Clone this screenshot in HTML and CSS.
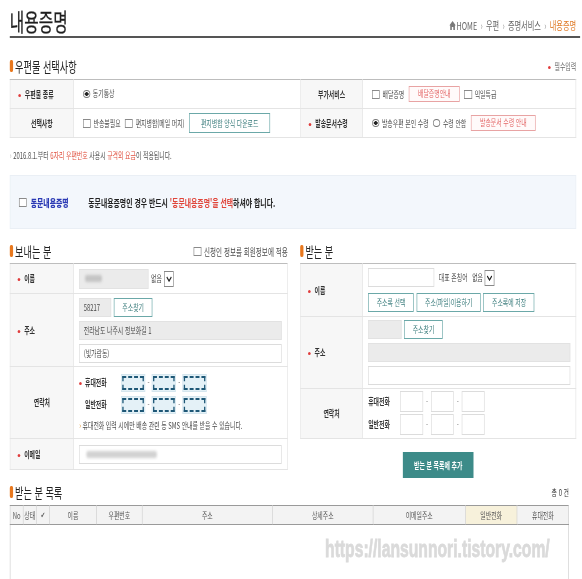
FILE: index.html
```html
<!DOCTYPE html>
<html lang="ko">
<head>
  <meta charset="UTF-8">
  <meta name="viewport" content="width=device-width, initial-scale=1.0">
  <title>내용증명 | 증명서비스</title>
  <link rel="stylesheet" href="styles.css">
</head>
<body>
  <div class="page">
    <!-- 상단 타이틀 + 경로 -->
    <div class="page-head">
      <h1>내용증명</h1>
      <div class="crumbs">
        <span class="home">
          <svg width="10" height="9" viewBox="0 0 10 9"><path d="M5 0 L10 4.6 H8.6 V9 H6.1 V6 H3.9 V9 H1.4 V4.6 H0 Z" fill="#7a7a7a"/></svg>
          HOME
        </span>
        <span class="sep">›</span><span>우편</span>
        <span class="sep">›</span><span>증명서비스</span>
        <span class="sep">›</span><span class="now">내용증명</span>
      </div>
    </div>

    <!-- 우편물 선택사항 -->
    <div class="sec-head first">
      <h2>우편물 선택사항</h2>
      <span class="req-note">필수입력</span>
    </div>
    <table class="form-table">
      <colgroup>
        <col class="c-th"><col class="c-val"><col class="c-th2"><col>
      </colgroup>
      <tr class="r29">
        <th class="req">우편물 종류</th>
        <td>
          <label class="opt"><span class="radio on"></span>동기통상</label>
        </td>
        <th>부가서비스</th>
        <td>
          <div class="opts">
            <label class="opt"><span class="chk"></span>배달증명</label>
            <button class="btn-red">배달증명안내</button>
            <label class="opt"><span class="chk"></span>익일특급</label>
          </div>
        </td>
      </tr>
      <tr class="r29">
        <th>선택사항</th>
        <td>
          <div class="opts">
            <label class="opt"><span class="chk"></span>반송불필요</label>
            <label class="opt"><span class="chk"></span>편지병합(메일 머지)</label>
            <button class="btn-line wide">편지병합 양식 다운로드</button>
          </div>
        </td>
        <th class="req">발송문서수령</th>
        <td>
          <div class="opts">
            <label class="opt"><span class="radio on"></span>발송우편 본인 수령</label>
            <label class="opt"><span class="radio"></span>수령 안함</label>
            <button class="btn-red">발송문서 수령 안내</button>
          </div>
        </td>
      </tr>
    </table>

    <p class="notice"><span class="arr">›</span> 2016.8.1.부터 <em>6자리 우편번호</em> 사용시 <em>규격외 요금</em>이 적용됩니다.</p>

    <div class="dongmun">
      <label class="opt"><span class="chk"></span><strong>동문내용증명</strong></label>
      <p>동문내용증명인 경우 반드시 <em>'동문내용증명'을 선택</em>하셔야 합니다.</p>
    </div>

    <div class="two-col">
      <!-- 보내는 분 -->
      <section>
        <div class="sec-head">
          <h2>보내는 분</h2>
          <label class="opt apply"><span class="chk"></span>신청인 정보를 회원정보에 적용</label>
        </div>
        <table class="form-table">
          <colgroup><col class="c-th"><col></colgroup>
          <tr class="r30">
            <th class="req">이름</th>
            <td>
              <div class="line">
                <span class="inp gray w-name"><span class="blur short"></span></span>
                <span class="sel">없음<span class="sel-arrow"><svg width="9" height="6" viewBox="0 0 9 6"><path d="M1 1 L4.5 5 L8 1" fill="none" stroke="#222" stroke-width="1.6"/></svg></span></span>
              </div>
            </td>
          </tr>
          <tr class="r73">
            <th class="req">주소</th>
            <td>
              <div class="stack">
                <div class="line">
                  <span class="inp gray w-zip">58217</span>
                  <button class="btn-line">주소찾기</button>
                </div>
                <span class="inp gray">전라남도 나주시 정보화길 1</span>
                <span class="inp">(빛가람동)</span>
              </div>
            </td>
          </tr>
          <tr class="r72">
            <th>연락처</th>
            <td>
              <div class="phone">
                <span class="ph-label req">휴대전화</span>
                <span class="tel"></span><span class="hy">-</span><span class="tel"></span><span class="hy">-</span><span class="tel"></span>
              </div>
              <div class="phone">
                <span class="ph-label">일반전화</span>
                <span class="tel"></span><span class="hy">-</span><span class="tel"></span><span class="hy">-</span><span class="tel"></span>
              </div>
              <p class="sms"><span class="arr">›</span> 휴대전화 입력 시에만 배송 관련 등 SMS 안내를 받을 수 있습니다.</p>
            </td>
          </tr>
          <tr class="r31">
            <th class="req">이메일</th>
            <td><span class="inp"><span class="blur long"></span></span></td>
          </tr>
        </table>
      </section>

      <!-- 받는 분 -->
      <section>
        <div class="sec-head">
          <h2>받는 분</h2>
        </div>
        <table class="form-table">
          <colgroup><col class="c-th2"><col></colgroup>
          <tr class="r53">
            <th class="req">이름</th>
            <td>
              <div class="stack wide-gap">
                <div class="line">
                  <span class="inp w-rname"></span>
                  <span class="honor">대표 존칭어</span>
                  <span class="sel boxed">없음<span class="sel-arrow"><svg width="9" height="6" viewBox="0 0 9 6"><path d="M1 1 L4.5 5 L8 1" fill="none" stroke="#222" stroke-width="1.6"/></svg></span></span>
                </div>
                <div class="line">
                  <button class="btn-line">주소록 선택</button>
                  <button class="btn-line">주소(파일)이용하기</button>
                  <button class="btn-line">주소록에 저장</button>
                </div>
              </div>
            </td>
          </tr>
          <tr class="r72">
            <th class="req">주소</th>
            <td>
              <div class="stack">
                <div class="line">
                  <span class="inp gray w-rzip"></span>
                  <button class="btn-line">주소찾기</button>
                </div>
                <span class="inp gray"></span>
                <span class="inp"></span>
              </div>
            </td>
          </tr>
          <tr class="r50">
            <th>연락처</th>
            <td>
              <div class="phone plain">
                <span class="ph-label">휴대전화</span>
                <span class="tel"></span><span class="hy">-</span><span class="tel"></span><span class="hy">-</span><span class="tel"></span>
              </div>
              <div class="phone plain">
                <span class="ph-label">일반전화</span>
                <span class="tel"></span><span class="hy">-</span><span class="tel"></span><span class="hy">-</span><span class="tel"></span>
              </div>
            </td>
          </tr>
        </table>
        <div class="add-wrap">
          <button class="btn-add">받는 분 목록에 추가</button>
        </div>
      </section>
    </div>

    <!-- 받는 분 목록 -->
    <div class="sec-head list-head">
      <h2>받는 분 목록</h2>
      <span class="total">총 0 건</span>
    </div>
    <table class="list">
      <colgroup>
        <col class="l-no"><col class="l-st"><col class="l-ck"><col class="l-name"><col class="l-zip">
        <col class="l-addr"><col class="l-detail"><col class="l-mail"><col class="l-tel"><col>
      </colgroup>
      <thead>
        <tr>
          <th>No</th><th>상태</th><th class="ck">✔</th><th>이름</th><th>우편번호</th>
          <th>주소</th><th>상세주소</th><th>이메일주소</th><th class="hl">일반전화</th><th>휴대전화</th>
        </tr>
      </thead>
      <tbody>
        <tr><td colspan="10"></td></tr>
      </tbody>
    </table>

    <div class="watermark">https://lansunnori.tistory.com/</div>
  </div>
</body>
</html>
```

FILE: styles.css
```css
/* 기본 */
* {
  box-sizing: border-box;
}

html, body {
  margin: 0;
  overflow: hidden;
  background: #fff;
}

body {
  font-family: "Noto Sans CJK KR", "Noto Sans", sans-serif;
  font-size: 9px;
  color: #4a4a4a;
}

p {
  margin: 0;
}

em {
  font-style: normal;
}

button {
  font: inherit;
  cursor: pointer;
}

/* 원본 캡처가 가로로 눌려 있어서 전체를 가로로만 줄인다 */
.page {
  position: relative;
  width: 890px;
  padding: 0 9px 0 15px;
  transform: scaleX(0.654);
  transform-origin: 0 0;
}

/* 상단 */
.page-head {
  display: flex;
  justify-content: space-between;
  align-items: flex-end;
  height: 38px;
  padding-top: 4px;
  margin-right: -6px;
  border-bottom: 2px solid #555;
}

.page-head h1 {
  margin: 0;
  font-size: 24px;
  line-height: 30px;
  font-weight: 400;
  color: #1e1e1e;
  -webkit-text-stroke: 0.3px #1e1e1e;
}

.crumbs {
  display: flex;
  align-items: center;
  gap: 5px;
  margin: 0 6px 4px 0;
  font-size: 11px;
  line-height: 14px;
  color: #666;
}

.crumbs .home {
  display: flex;
  align-items: center;
  gap: 1px;
}

.crumbs .sep {
  color: #999;
}

.crumbs .now {
  color: #e07b27;
}

/* 섹션 제목 */
.sec-head {
  display: flex;
  justify-content: space-between;
  align-items: center;
  height: 20px;
  margin-top: 12px;
  margin-bottom: 2px;
}

.sec-head.first {
  margin-top: 18px;
  margin-bottom: 3px;
}

.sec-head h2 {
  display: flex;
  align-items: center;
  gap: 3px;
  margin: 0;
  font-size: 14px;
  line-height: 20px;
  font-weight: 400;
  color: #222;
}

.sec-head h2::before {
  content: "";
  width: 5px;
  height: 12px;
  border-radius: 2px;
  background: #e8781e;
}

.req-note {
  color: #666;
}

.req-note::before,
.req::before {
  content: "";
  display: inline-block;
  width: 4px;
  height: 3px;
  margin-right: 6px;
  border-radius: 50%;
  background: #e03b3b;
  vertical-align: middle;
}

.apply {
  font-size: 10px;
}

/* 입력 표 */
.form-table {
  width: 100%;
  border-collapse: collapse;
  table-layout: fixed;
}

.form-table th,
.form-table td {
  padding: 0 14px;
  border: 1px solid #e4e4e4;
  vertical-align: middle;
  white-space: nowrap;
}

.form-table tr:first-child > * {
  border-top: 1px solid #bdbdbd;
}

.form-table th {
  background: #f7f7f7;
  font-weight: 700;
  color: #333;
  text-align: center;
}

.form-table th.req {
  padding-left: 12px;
  text-align: left;
}

.c-th {
  width: 97px;
}

.c-val {
  width: 347px;
}

.c-th2 {
  width: 95px;
}

.r29 { height: 29px; }
.r30 { height: 30px; }
.r31 { height: 31px; }
.r50 { height: 50px; }
.r53 { height: 53px; }
.r72 { height: 72px; }
.r73 { height: 73px; }

.two-col .form-table td {
  padding: 0 8px;
}

.two-col .form-table th.req {
  padding-left: 11px;
}

/* 선택 항목 */
.opts {
  display: flex;
  align-items: center;
  gap: 7px;
}

.opt {
  display: inline-flex;
  align-items: center;
  gap: 4px;
  color: #4a4a4a;
}

.chk {
  flex: none;
  width: 12px;
  height: 9px;
  border: 1px solid #8a8a8a;
  background: #fff;
}

.radio {
  flex: none;
  width: 11px;
  height: 8px;
  border: 1px solid #777;
  border-radius: 50%;
  background: #fff;
}

.radio.on {
  background: radial-gradient(closest-side, #222 55%, #fff 70%);
}

.btn-line {
  height: 19px;
  padding: 0 12px;
  border: 1px solid #6ba8a8;
  background: #fff;
  color: #3a7c7c;
  line-height: 17px;
}

.btn-line.wide {
  padding: 0 17px;
  height: 20px;
}

.btn-red {
  height: 16px;
  padding: 0 13px;
  border: 1px solid #e8a3a3;
  background: #fffafa;
  color: #e46a6a;
  line-height: 14px;
}

/* 안내 문구 */
.notice {
  margin-top: 11px;
  line-height: 14px;
}

.notice .arr {
  color: #bbb;
}

.notice em {
  color: #e0503f;
}

.dongmun {
  display: flex;
  align-items: center;
  gap: 30px;
  height: 54px;
  margin-top: 12px;
  padding-left: 13px;
  background: #f3f7fc;
  border: 1px solid #eaeff5;
  font-size: 10.5px;
  font-weight: 700;
  color: #222;
}

.dongmun .opt {
  gap: 6px;
}

.dongmun strong {
  color: #2b3ab5;
}

.dongmun em {
  color: #e0453a;
}

/* 보내는 분 / 받는 분 */
.two-col {
  display: grid;
  grid-template-columns: 425px 1fr;
  gap: 19px;
}

.line {
  display: flex;
  align-items: center;
  gap: 4px;
}

.stack {
  display: flex;
  flex-direction: column;
  gap: 4px;
}

.stack.wide-gap {
  gap: 6px;
}

.inp {
  display: block;
  height: 19px;
  padding: 0 6px;
  border: 1px solid #dcdcdc;
  background: #fff;
  line-height: 17px;
  color: #4a4a4a;
}

.inp.gray {
  background: #ebebeb;
  border-color: #e2e2e2;
}

.w-name {
  width: 106px;
  height: 20px;
}

.w-zip {
  width: 49px;
}

.w-rname {
  width: 101px;
}

.w-rzip {
  width: 51px;
}

.blur {
  display: inline-block;
  height: 7px;
  margin-top: 5px;
  border-radius: 3px;
  background: #c4c4c4;
  filter: blur(1.6px);
}

.blur.short {
  width: 26px;
  margin-left: 2px;
}

.blur.long {
  width: 108px;
  margin-left: 4px;
  background: #d2d2d2;
}

.sel {
  display: inline-flex;
  align-items: center;
  gap: 3px;
  color: #444;
}

.sel.boxed {
  margin-left: 3px;
}

.sel-arrow {
  display: flex;
  align-items: center;
  justify-content: center;
  width: 15px;
  height: 16px;
  border: 1px solid #888;
  background: #fff;
}

.honor {
  margin-left: 3px;
}

.phone {
  display: flex;
  align-items: center;
  gap: 2px;
  height: 20px;
  margin-bottom: 2px;
}

.ph-label {
  width: 62px;
  padding-left: 9px;
  font-weight: 700;
  color: #333;
}

.ph-label.req {
  padding-left: 0;
}

.ph-label.req::before {
  margin-right: 5px;
}

.hy {
  width: 6px;
  text-align: center;
  color: #777;
}

.tel {
  width: 37px;
  height: 18px;
  background: #e4f1f7;
  border: 1px solid #d5e6ee;
  outline: 2px dashed #1f5877;
  outline-offset: -4px;
}

.phone.plain {
  height: 21px;
}

.phone.plain .ph-label {
  width: 47px;
  padding-left: 0;
}

.phone.plain .tel {
  width: 35px;
  height: 21px;
  background: #fff;
  border: 1px solid #dcdcdc;
  outline: none;
}

.phone.plain .hy {
  width: 8px;
}

.sms {
  margin-top: 4px;
  line-height: 14px;
}

.sms .arr {
  color: #e39b3b;
}

.add-wrap {
  display: flex;
  justify-content: center;
  margin-top: 13px;
}

.btn-add {
  height: 26px;
  padding: 0 17px;
  border: none;
  background: #3d8b89;
  color: #fff;
  font-weight: 700;
}

/* 받는 분 목록 */
.sec-head.list-head {
  margin-top: 4px;
  margin-bottom: 3px;
  margin-right: 11px;
}

.total {
  color: #333;
}

.list {
  width: calc(100% - 11px);
  border-collapse: collapse;
  table-layout: fixed;
}

.list th {
  height: 19px;
  padding: 0;
  border: 1px solid #cfcfcf;
  border-top: 1px solid #9a9a9a;
  border-bottom: 1px solid #9a9a9a;
  background: #f3f3f3;
  font-weight: 400;
  color: #555;
  white-space: nowrap;
}

.list th.ck {
  font-family: "DejaVu Sans", sans-serif;
  font-size: 8px;
}

.list th.hl {
  background: #f7f1db;
}

.list td {
  height: 60px;
  border-left: 1px solid #cfcfcf;
  border-right: 1px solid #cfcfcf;
}

.l-no { width: 20px; }
.l-st { width: 20px; }
.l-ck { width: 20px; }
.l-name { width: 72px; }
.l-zip { width: 70px; }
.l-addr { width: 199px; }
.l-detail { width: 154px; }
.l-mail { width: 141px; }
.l-tel { width: 79px; }

/* 캡처 위에 찍힌 워터마크 */
.watermark {
  position: absolute;
  left: 497px;
  top: 535px;
  font-family: "Liberation Sans", sans-serif;
  font-size: 24px;
  font-weight: 700;
  color: #dadada;
  -webkit-text-stroke: 0.8px #dadada;
  white-space: nowrap;
}
```
